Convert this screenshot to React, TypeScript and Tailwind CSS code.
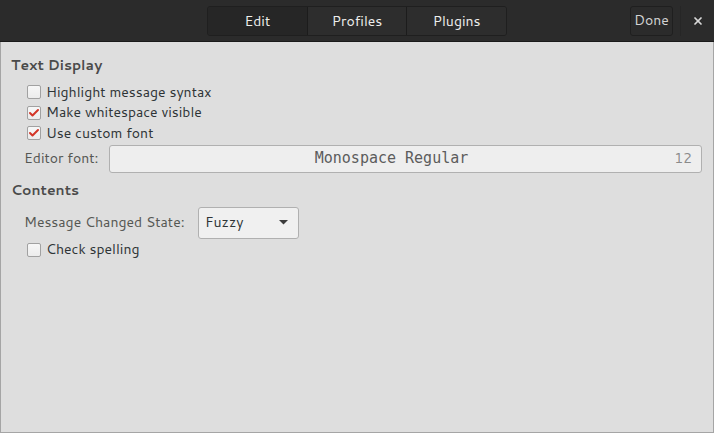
import { Check, X } from "lucide-react";

const sans = "font-['Cantarell','Open_Sans','Noto_Sans',sans-serif]";

function CheckRow({ label, checked }: { label: string; checked?: boolean }) {
  return (
    <div className="flex items-center h-[20.5px] pl-[26px]">
      <span className="w-[14px] h-[14px] rounded-[2px] border border-[#a1a1a1] bg-gradient-to-b from-[#f7f7f7] to-[#ececec] flex items-center justify-center">
        {checked && <Check size={12} strokeWidth={4} className="text-[#d33527]" />}
      </span>
      <span className="ml-[5px] text-[14px] text-[#2e3436]">{label}</span>
    </div>
  );
}

function SwitchButton({ label, active }: { label: string; active?: boolean }) {
  return (
    <div
      className={
        "flex-1 h-full flex items-center justify-center text-[14px] text-[#eeeeec] border-r border-[#1c1c1c] last:border-r-0 " +
        (active ? "bg-[#262626]" : "bg-[#2d2d2d]")
      }
    >
      {label}
    </div>
  );
}

export default function App() {
  return (
    <div className={`w-[714px] h-[433px] flex flex-col bg-[#dedede] ${sans}`}>
      {/* header bar */}
      <div className="h-[42px] shrink-0 bg-[#2b2b2b] border-b border-[#1a1a1a] flex items-center relative">
        <div className="absolute left-[207px] top-[6px] w-[300px] h-[30px] flex rounded-[3px] border border-[#1f1f1f] overflow-hidden">
          <SwitchButton label="Edit" active />
          <SwitchButton label="Profiles" />
          <SwitchButton label="Plugins" />
        </div>
        <div className="ml-auto flex items-center h-full">
          <div className="h-[30px] w-[43px] flex items-center justify-center rounded-[3px] border border-[#1f1f1f] bg-[#2b2b2b] text-[14px] text-[#d3d3d3]">
            Done
          </div>
          <div className="w-px h-[30px] ml-[7px] bg-[#262626]" />
          <div className="w-[33px] flex items-center justify-center">
            <X size={12} strokeWidth={3.5} className="text-[#d8d8d8]" />
          </div>
        </div>
      </div>

      {/* content */}
      <div className="flex-1 border-x border-b border-[#a5a5a5] pt-[13px]">
        <div className="pl-[10px] h-[20px] flex items-center text-[14px] font-bold text-[#4a4a4a]">Text Display</div>
        <div className="pt-[7px]">
          <CheckRow label="Highlight message syntax" />
          <CheckRow label="Make whitespace visible" checked />
          <CheckRow label="Use custom font" checked />
        </div>
        <div className="flex items-center mt-[1px] pl-[23px] pr-[11px]">
          <span className="text-[14px] text-[#555753] w-[85px]">Editor font:</span>
          <div className="flex-1 h-[28px] rounded-[3px] border border-[#b0b0b0] bg-[#eeeeee] flex items-center relative">
            <span className="flex-1 pr-[28px] text-center text-[15px] text-[#5c5c5c] font-['DejaVu_Sans_Mono',monospace]">
              Monospace Regular
            </span>
            <span className="absolute right-[9px] text-[14px] text-[#8a8a8a]">12</span>
          </div>
        </div>
        <div className="pl-[10px] mt-[8px] h-[20px] flex items-center text-[14px] font-bold text-[#4a4a4a]">Contents</div>
        <div className="flex items-center mt-[6px] pl-[23px]">
          <span className="text-[14px] text-[#555753] w-[174px]">Message Changed State:</span>
          <div className="w-[101px] h-[32px] rounded-[3px] border border-[#b0b0b0] bg-[#f0f0f0] flex items-center pl-[6px] pr-[10px]">
            <span className="text-[14px] text-[#2e3436]">Fuzzy</span>
            <svg className="ml-auto" width="9" height="5" viewBox="0 0 9 5">
              <path d="M0 0 L9 0 L4.5 4.5 Z" fill="#3b3b3b" />
            </svg>
          </div>
        </div>
        <div className="mt-[1px]">
          <CheckRow label="Check spelling" />
        </div>
      </div>
    </div>
  );
}
